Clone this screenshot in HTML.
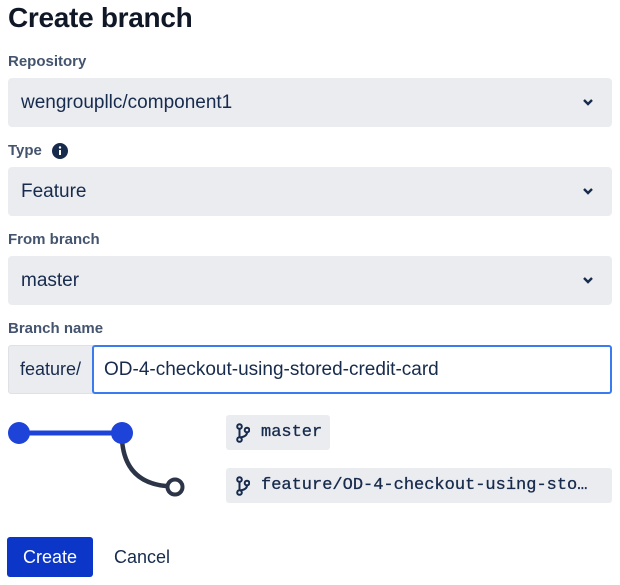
<!DOCTYPE html>
<html><head><style>
*{box-sizing:border-box;margin:0;padding:0}
body{width:620px;height:585px;background:#fff;font-family:"Liberation Sans",sans-serif;color:#172b4d;position:relative;overflow:hidden}
.a{position:absolute}
h1{position:absolute;left:8px;top:2px;font-size:28px;font-weight:bold;color:#101828;letter-spacing:-0.3px}
.lbl{position:absolute;left:8px;font-size:15px;font-weight:bold;color:#44546f}
.sel{position:absolute;left:8px;width:604px;height:49px;background:#ebecf0;border-radius:4px;font-size:19px;color:#172b4d;padding-left:13px;line-height:49px}
.sel svg{position:absolute;right:18px;top:20px}
.chip{position:absolute;left:226px;height:35px;background:#ebecf0;border-radius:3px;font-family:"Liberation Mono",monospace;font-size:17px;line-height:35px;padding-left:35px;color:#172b4d;-webkit-text-stroke:0.3px #172b4d}
.chip svg{position:absolute;left:10px;top:8px}
</style></head><body>
<h1>Create branch</h1>
<div class="lbl" style="top:53px">Repository</div>
<div class="sel" style="top:78px">wengroupllc/component1<svg width="12" height="8" viewBox="0 0 12 8"><path d="M2 2l4 4 4-4" stroke="#172b4d" stroke-width="2.4" fill="none"/></svg></div>
<div class="lbl" style="top:142px">Type</div>
<svg class="a" style="left:51px;top:142px" width="18" height="18" viewBox="0 0 18 18"><circle cx="9" cy="9" r="8" fill="#172b4d"/><rect x="8" y="8" width="2" height="5" fill="#fff"/><circle cx="9" cy="5.5" r="1.2" fill="#fff"/></svg>
<div class="sel" style="top:167px">Feature<svg width="12" height="8" viewBox="0 0 12 8"><path d="M2 2l4 4 4-4" stroke="#172b4d" stroke-width="2.4" fill="none"/></svg></div>
<div class="lbl" style="top:231px">From branch</div>
<div class="sel" style="top:256px">master<svg width="12" height="8" viewBox="0 0 12 8"><path d="M2 2l4 4 4-4" stroke="#172b4d" stroke-width="2.4" fill="none"/></svg></div>
<div class="lbl" style="top:320px">Branch name</div>
<div class="a" style="left:8px;top:345px;width:86px;height:49px;background:#ebecf0;border:1px solid #dfe1e6;border-radius:3px 0 0 3px;font-size:18px;line-height:47px;padding-left:11px">feature/</div>
<div class="a" style="left:92px;top:345px;width:520px;height:49px;border:2px solid #3a7cf0;border-radius:3px;font-size:19px;line-height:45px;padding-left:10px;background:#fff">OD-4-checkout-using-stored-credit-card</div>
<svg class="a" style="left:0;top:410px" width="200" height="100" viewBox="0 410 200 100">
<path d="M122 440 Q125 482 166 486" stroke="#2c3447" stroke-width="4.5" fill="none"/>
<circle cx="175" cy="487" r="7.5" fill="#fff" stroke="#2c3447" stroke-width="4"/>
<line x1="19" y1="433" x2="122" y2="433" stroke="#1d43d8" stroke-width="5"/>
<circle cx="19" cy="433" r="11" fill="#1d43d8"/>
<circle cx="122" cy="433" r="11" fill="#1d43d8"/>
</svg>
<div class="chip" style="top:415px;width:104px">master<svg width="14" height="20" viewBox="0 0 14 20"><circle cx="3.5" cy="3.5" r="2.3" fill="none" stroke="#172b4d" stroke-width="2"/><circle cx="3.5" cy="16.5" r="2.3" fill="none" stroke="#172b4d" stroke-width="2"/><circle cx="11" cy="7" r="2.3" fill="none" stroke="#172b4d" stroke-width="2"/><path d="M3.5 6v8M11 9.5q0 4-7 5" stroke="#172b4d" stroke-width="2" fill="none"/></svg></div>
<div class="chip" style="top:468px;width:386px">feature/OD-4-checkout-using-sto…<svg width="14" height="20" viewBox="0 0 14 20"><circle cx="3.5" cy="3.5" r="2.3" fill="none" stroke="#172b4d" stroke-width="2"/><circle cx="3.5" cy="16.5" r="2.3" fill="none" stroke="#172b4d" stroke-width="2"/><circle cx="11" cy="7" r="2.3" fill="none" stroke="#172b4d" stroke-width="2"/><path d="M3.5 6v8M11 9.5q0 4-7 5" stroke="#172b4d" stroke-width="2" fill="none"/></svg></div>
<div class="a" style="left:7px;top:537px;width:86px;height:40px;background:#0c36c8;border-radius:3px;color:#fff;font-size:18px;line-height:40px;text-align:center">Create</div>
<div class="a" style="left:114px;top:537px;height:40px;font-size:18px;line-height:40px;color:#172b4d">Cancel</div>
</body></html>
